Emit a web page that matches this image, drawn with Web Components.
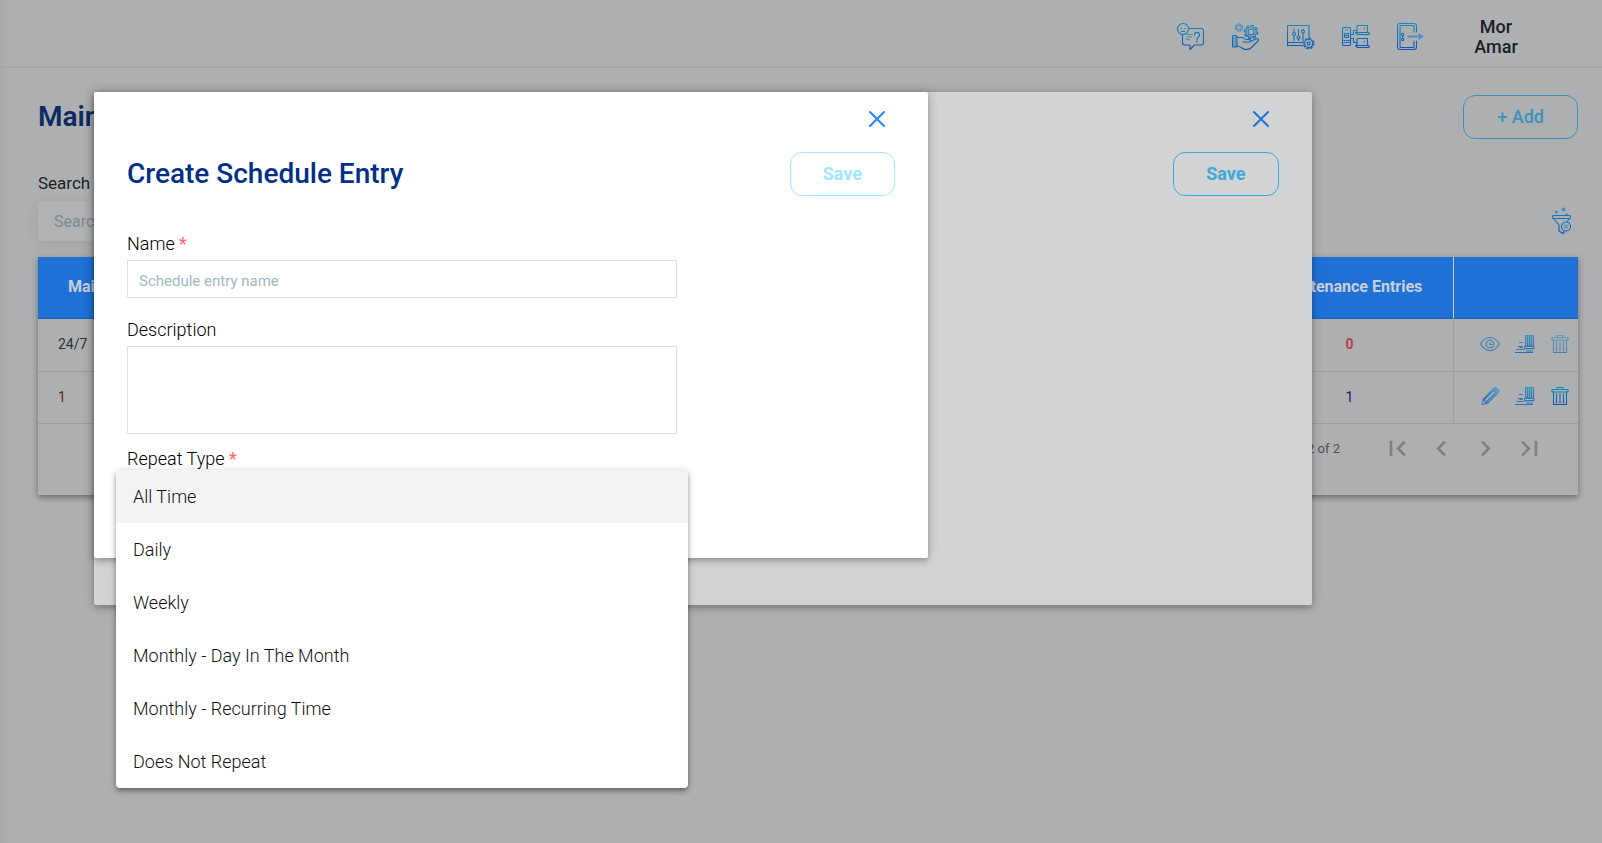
<!DOCTYPE html>
<html lang="en">
<head>
<meta charset="utf-8">
<title>Maintenance</title>
<style>
html, body { margin: 0; }
body { font-family: Roboto, "Liberation Sans", sans-serif; background: #aeafb1; color: #1d1e24; }
</style>
</head>
<body>
<maintenance-app></maintenance-app>
<script>
function define(name, html, setup) {
  const template = document.createElement('template');
  template.innerHTML = html;
  customElements.define(name, class extends HTMLElement {
    connectedCallback() {
      if (this.shadowRoot) return;
      const root = this.attachShadow({ mode: 'open' });
      root.append(template.content.cloneNode(true));
      if (setup) setup(this, root);
    }
  });
}

/* Line icons: [width, height, drawing]. The "s" and "t" classes mark softer parts. */
const ICONS = {
  help: [28, 28, `<circle cx="6" cy="6" r="5.5"/><path d="M11.5 5.5H24a2.500 2.500 0 0 1 2.500 2.500v11.500a2.500 2.500 0 0 1-2.500 2.500h-6.500L13 26.500V22H8a2.500 2.500 0 0 1-2.500-2.500V11.500"/><path d="M4 5.500h.5M7.500 5.500H8M4.500 8.500h3"/><path d="M9.500 11.500h6M9.500 14h5M9.500 16.500h3" class="t"/><path d="M17.500 12c0-3.500 5-3.500 5 0 0 2.500-2.500 2-2.500 4.500M20 18v1.200"/>`],
  services: [28, 28, `<circle cx="7" cy="4.500" r="2.300" class="t"/><circle cx="7" cy="4.500" r="3.700" class="t" stroke-dasharray="1.500 1.400"/><circle cx="19" cy="9" r="3"/><circle cx="19" cy="9" r="5.300"/><circle cx="19" cy="9" r="6.700" stroke-dasharray="2.600 2.660"/><rect x=".5" y="12.500" width="4.500" height="11.500" rx="1"/><path d="M2 14v8.500M3.500 14v8.500" class="t"/><path d="M5 14.500h4.500c2 0 3 1.500 4.500 2h3c2 0 2 2.500 0 2.500h-6M18 18.500l6-2.500c2-1 3.500.5 2 2l-7 7c-1.500 1.500-3.500 1.500-5.500 1.500-3 0-4-3-8.500-3.500"/>`],
  settings: [28, 28, `<path d="M15.500 22.500H.5V2.500H22v12M.5 19.500h15"/><path d="M7 6v3.500M7 13v4.500M11.500 6v7M11.500 16v1.500M16 6v1M16 10v7.500"/><circle cx="7" cy="11" r="1.500"/><circle cx="11.500" cy="14.500" r="1.500"/><circle cx="16" cy="8.500" r="1.500"/><circle cx="21.700" cy="20.500" r="1.400"/><circle cx="21.700" cy="20.500" r="4"/><circle cx="21.700" cy="20.500" r="5.200" stroke-dasharray="2 2.080"/>`],
  devices: [28, 28, `<rect x=".5" y="4.500" width="8" height="18" rx="1"/><path d="M2.500 10.500h4v4h-4zM2.500 12.500h4M4 7h1M2 17.500h1M4.200 17.500h1M6.300 17.500h1M2 19.500h1M4.200 19.500h1M6.300 19.500h1"/><path d="M9 11.500h2.500v-4h3M9 15.500h2.500v4h3"/><path d="M15 9.500v-6a1 1 0 0 1 1-1h9.500v7M13.500 9.500h13.500v2H15.500zM15 22.500v-6a1 1 0 0 1 1-1h9.500v7M13.500 22.500h13.500v2H15.500z"/><path d="M23 5l-1.500 1.500M23 18l-1.500 1.500" class="t"/>`],
  exit: [28, 28, `<path d="M19.500 9V3A2.500 2.500 0 0 0 17 .5H3A2.500 2.500 0 0 0 .5 3v21A2.500 2.500 0 0 0 3 26.500h14a2.500 2.500 0 0 0 2.500-2.500v-6"/><path d="M17 9V3.500a1 1 0 0 0-1-1H4a1 1 0 0 0-1 1v20a1 1 0 0 0 1 1h12a1 1 0 0 0 1-1V18"/><circle cx="5.700" cy="11.500" r="1.200"/><circle cx="5.700" cy="16.500" r="1.200"/><path d="M5.700 12.700v2.600"/><path d="M11.500 13.500H22" stroke-width="2" class="t"/><path d="M21.500 10l5.500 3.500-5.500 3.500z" class="s"/>`],
  filter: [20, 28, `<circle cx="4.500" cy="5" r="1.600" class="s"/><circle cx="11.500" cy="2.500" r="2.100" class="s"/><circle cx="14.500" cy="7.500" r="1.200" class="s"/><rect x=".5" y="8.500" width="18" height="3" rx="1"/><path d="M1.500 11.500l5.500 6.500v6l4 2.500 1-.8v-1.500M17.500 11.500l-2 2.500"/><circle cx="14" cy="19.500" r="4.500"/><path d="M12.500 18l3 3M15.500 18l-3 3" class="t"/>`],
  eye: [20, 20, `<path d="M.5 10Q4.500 3.500 10 3.500T19.500 10Q15.500 16.500 10 16.500T.5 10z"/><circle cx="10" cy="10" r="3.800"/><path d="M10 8.500v2h2"/>`],
  assign: [20, 20, `<path d="M10.500 1.500h8V12h-8z" fill="#4c90c2" fill-opacity=".5"/><path d="M12.500 2v10M14.500 2v10M16.500 2v10"/><path d="M9.500 12.500h9.500v2H9.500z"/><path d="M11 15.500h7v2.500h-7z" class="s"/><path d="M4.500 8.500h3M3 12.500h4.500M5 13.500h2M2 15.500h7M.5 18.500h17"/>`],
  trash: [20, 20, `<path d="M7 3.500v-2h6v2M2 3.500h16v2.500H2zM3.500 6v12.500h13V6M6.500 7.500v9.500M10 7.500v9.500M13.500 7.500v9.500"/>`],
  pencil: [20, 20, `<path d="M2 18.500l1-5L14 2.500l1.500-1 3.500 3.500-1 1.500L7 17.500zM3 13.500l4 4M4.500 13.500L14 4M6.500 15.500l9.500-9.500"/><path d="M12 4.500l3.500-3.500 4 4-3.500 3.500z" class="s"/><path d="M2 18.500l.5-3 2.500 2.500z" class="s"/>`]
};
define('line-icon', `<style>:host { display: block; line-height: 0; }
svg { fill: none; stroke: url(#g); stroke-width: 1.1; stroke-linecap: round; stroke-linejoin: round; }
.s { fill: #4c90c2; stroke: none; } .t { stroke: #4c90c2; }</style>`, (el, root) => {
  const [w, h, art] = ICONS[el.getAttribute('name')];
  const box = document.createElement('div');
  box.innerHTML = `<svg width="${w}" height="${h}" viewBox="0 0 ${w} ${h}" aria-hidden="true"><defs><linearGradient id="g" gradientUnits="userSpaceOnUse" x1="0" y1="0" x2="0" y2="${h}"><stop offset="0" stop-color="#128fba"/><stop offset="1" stop-color="#0c4fb8"/></linearGradient></defs>${art}</svg>`;
  root.append(box);
});

define('outline-button', `<style>
:host { display: block; --tone: #3b93bb; --weight: 500; --side: 33px; }
:host([tone]) { --weight: 700; --side: 32px; }
:host([tone="bright"]) { --tone: #3fa9d6; } :host([tone="faded"]) { --tone: #a2e6ff; }
button { font: var(--weight) 18px/20px Roboto, "Liberation Sans", sans-serif; height: 44px; padding: 0 var(--side); border: 1px solid var(--tone); border-radius: 12px; background: none; color: var(--tone); }
</style><button type="button"><slot></slot></button>`, (el, root) => {
  root.querySelector('button').disabled = el.hasAttribute('disabled');
});

define('app-header', `<style>
:host { display: flex; align-items: center; justify-content: flex-end; height: 66px; padding: 0 81px 0 24px; border-bottom: 2px solid #a5a6a8; }
nav { display: flex; gap: 27px; padding-top: 7px; }
a { display: block; }
.user { width: 50px; margin-left: 46px; padding-top: 8px; text-align: center; font-weight: 500; font-size: 18px; line-height: 20px; color: #1d1e26; }
</style>
<nav>
<a href="#help" aria-label="Help"><line-icon name="help"></line-icon></a>
<a href="#services" aria-label="Services"><line-icon name="services"></line-icon></a>
<a href="#settings" aria-label="Settings"><line-icon name="settings"></line-icon></a>
<a href="#devices" aria-label="Devices"><line-icon name="devices"></line-icon></a>
<a href="#exit" aria-label="Log out"><line-icon name="exit"></line-icon></a>
</nav>
<div class="user"><slot></slot></div>`);

define('search-bar', `<style>
:host { display: flex; align-items: flex-end; justify-content: space-between; }
label { display: block; font-size: 17px; line-height: 20px; margin-bottom: 8px; }
input { box-sizing: border-box; width: 300px; height: 40px; padding: 0 16px; border: 0; border-radius: 4px; background: #b1b2b4; font: 16px Roboto, "Liberation Sans", sans-serif; box-shadow: 0 4px 14px rgba(0,0,0,.08); }
input::placeholder { color: #7b8a92; opacity: 1; }
button { display: block; border: 0; padding: 0; margin: 0 6px 6px; background: none; }
</style>
<div><label for="q">Search</label><input id="q" type="text" placeholder="Search"></div>
<button type="button" aria-label="Clear filters"><line-icon name="filter"></line-icon></button>`);

define('page-controls', `<style>
:host { display: flex; align-items: center; justify-content: flex-end; height: 48px; padding: 0 29px 23px 0; font-size: 13px; color: #505154; }
div { display: flex; gap: 4px; margin-left: 37px; }
button { display: grid; place-items: center; width: 40px; height: 40px; padding: 0; border: 0; background: none; }
svg { fill: #7f8082; }
</style>
<span>1 – 2 of 2</span>
<div>
<button type="button" aria-label="First page"><svg width="31" height="31" viewBox="0 0 24 24"><path d="M18.410 16.590L13.820 12l4.590-4.590L17 6l-6 6 6 6zM6 6h2v12H6z"/></svg></button>
<button type="button" aria-label="Previous page"><svg width="31" height="31" viewBox="0 0 24 24"><path d="M15.410 7.410L14 6l-6 6 6 6 1.410-1.410L10.830 12z"/></svg></button>
<button type="button" aria-label="Next page"><svg width="31" height="31" viewBox="0 0 24 24"><path d="M10 6L8.590 7.410 13.170 12l-4.580 4.590L10 18l6-6z"/></svg></button>
<button type="button" aria-label="Last page"><svg width="31" height="31" viewBox="0 0 24 24"><path d="M5.590 7.410L10.180 12l-4.590 4.590L7 18l6-6-6-6zM16 6h2v12h-2z"/></svg></button>
</div>`);

define('entries-table', `<style>
:host { display: block; box-shadow: 0 3px 5px rgba(0,0,0,.28), 0 1px 8px rgba(0,0,0,.12); }
table { width: 100%; border-collapse: separate; border-spacing: 0; table-layout: fixed; }
th, td { box-sizing: border-box; }
.count { width: 210px; } .actions { width: 124px; }
th { height: 62px; padding: 0 30px 3px; border-bottom: 1px solid #1a62b8; background: #1f71d6; color: #c9cfd8; font-size: 16px; font-weight: 700; text-align: left; }
th.count { padding: 0 0 3px; text-align: center; border-right: 1px solid #c9cfd8; }
td { height: 52px; padding: 0 20px 2px; border-bottom: 1px solid #9c9da0; font-size: 14px; color: #303136; }
tbody tr:first-child td { height: 53px; }
td.count { padding: 0 0 2px 2px; text-align: center; border-right: 1px solid #9c9da0; color: #1c1c6c; }
td.none { color: #b4424d; font-weight: 700; }
td.actions { padding: 0 8px 3px 26px; }
.row { display: flex; gap: 15px; }
button { padding: 0; border: 0; background: none; } .dim { opacity: .55; } .soft { opacity: .75; }
.old { color: #6b1c25; }
</style>
<table>
<thead><tr><th>Maintenance</th><th class="count">Maintenance Entries</th><th class="actions" aria-label="Actions"></th></tr></thead>
<tbody>
<tr><td>24/7</td><td class="count none">0</td><td class="actions"><div class="row">
<button class="soft" aria-label="View"><line-icon name="eye"></line-icon></button><button class="soft" aria-label="Assign"><line-icon name="assign"></line-icon></button><button class="dim" aria-label="Delete" disabled><line-icon name="trash"></line-icon></button></div></td></tr>
<tr><td class="old">1</td><td class="count">1</td><td class="actions"><div class="row">
<button class="soft" aria-label="Edit"><line-icon name="pencil"></line-icon></button><button class="soft" aria-label="Assign"><line-icon name="assign"></line-icon></button><button aria-label="Delete"><line-icon name="trash"></line-icon></button></div></td></tr>
</tbody>
</table>
<page-controls></page-controls>`);

define('form-field', `<style>
:host { display: block; position: relative; }
label { display: block; font-size: 18px; font-weight: 300; line-height: 20px; margin-bottom: 6px; color: #000; }
b { color: #ff6470; font-weight: 400; }
input, textarea, button { display: block; box-sizing: border-box; width: 100%; height: 38px; padding: 3px 11px 0; border: 1px solid #dfe0e1; border-radius: 0; background: #fff; font: 400 15px Roboto, "Liberation Sans", sans-serif; resize: none; }
textarea { height: 88px; }
::placeholder { color: #a3b8c0; opacity: 1; }
</style><slot></slot>`, (el, root) => {
  const kind = el.getAttribute('kind');
  const label = document.createElement('label');
  label.htmlFor = 'control';
  label.textContent = el.getAttribute('label') + ' ';
  if (el.hasAttribute('required')) label.insertAdjacentHTML('beforeend', '<b>*</b>');
  const control = document.createElement(kind);
  control.id = 'control';
  if (el.hasAttribute('hint')) control.placeholder = el.getAttribute('hint');
  if (kind === 'button') {
    control.type = 'button';
    control.setAttribute('role', 'combobox');
    control.setAttribute('aria-expanded', 'true');
  }
  root.querySelector('slot').before(label, control);
});

define('option-list', `<style>
:host { position: absolute; z-index: 2; top: 21px; left: -11px; right: -11px; border-radius: 4px; overflow: hidden; background: #fff; box-shadow: 0 2px 4px -1px rgba(0,0,0,.3), 0 4px 5px rgba(0,0,0,.18), 0 1px 10px rgba(0,0,0,.14); }
</style><div role="listbox" aria-label="Repeat Type"><slot></slot></div>`);
define('list-option', `<style>
:host { display: block; } :host([active]) { background: #f4f4f4; }
button { display: block; width: 100%; height: 53px; padding: 0 17px 1px; border: 0; background: none; text-align: left; font: 300 18px Roboto, "Liberation Sans", sans-serif; color: #111; }
</style><button type="button" role="option"><slot></slot></button>`);

define('modal-panel', `<style>
:host { display: block; position: absolute; top: 92px; left: 94px; box-sizing: border-box; padding: 15px 33px 0; border-radius: 2px; background: #fff; box-shadow: 0 1px 12px rgba(0,0,0,.2), 0 3px 5px rgba(0,0,0,.18); }
:host([size="wide"]) { width: 76vw; min-height: 513px; background: #d2d3d4; --cross: #1f71d6; }
:host([size="narrow"]) { width: calc(52vw + 1px); min-height: 466px; }
.close { display: block; margin: 0 6px 0 auto; padding: 0; border: 0; background: none; width: 24px; height: 24px; }
svg { display: block; stroke: var(--cross, #1f87ff); stroke-width: 2; stroke-linecap: round; }
header { display: flex; justify-content: space-between; align-items: center; margin-top: 21px; }
h2 { margin: 0; font-size: 28px; line-height: 32px; font-weight: 500; color: #003087; }
</style>
<button class="close" type="button" aria-label="Close"><svg width="24" height="24" viewBox="0 0 24 24"><path d="M5 5l14 14M19 5L5 19"/></svg></button>
<header><h2><slot name="title"></slot></h2><slot name="action"></slot></header>
<slot></slot>`);

define('schedule-form', `<style>
:host { display: grid; gap: 22px; max-width: 550px; margin-top: 38px; }
.near { margin-top: -7px; }
</style>
<form-field kind="input" label="Name" hint="Schedule entry name" required></form-field>
<form-field kind="textarea" label="Description"></form-field>
<form-field class="near" kind="button" label="Repeat Type" required>
<option-list>
<list-option active>All Time</list-option>
<list-option>Daily</list-option>
<list-option>Weekly</list-option>
<list-option>Monthly - Day In The Month</list-option>
<list-option>Monthly - Recurring Time</list-option>
<list-option>Does Not Repeat</list-option>
</option-list>
</form-field>`);

define('maintenance-app', `<style>
:host { display: block; min-height: 100vh; box-shadow: inset 12px 0 12px -12px rgba(0,0,0,.08); }
main { padding: 27px 24px 24px 38px; }
.top { display: flex; justify-content: space-between; margin-bottom: 34px; }
h1 { margin: 6px 0 0; font-size: 28px; line-height: 32px; font-weight: 600; color: #0c2a63; }
search-bar { margin-bottom: 16px; }
</style>
<app-header>Mor Amar</app-header>
<main>
<div class="top"><h1>Maintenance</h1><outline-button>+ Add</outline-button></div>
<search-bar></search-bar>
<entries-table></entries-table>
</main>
<modal-panel size="wide"><outline-button slot="action" tone="bright">Save</outline-button></modal-panel>
<modal-panel size="narrow"><span slot="title">Create Schedule Entry</span><outline-button slot="action" tone="faded" disabled>Save</outline-button>
<schedule-form></schedule-form></modal-panel>`);
</script>
</body>
</html>
